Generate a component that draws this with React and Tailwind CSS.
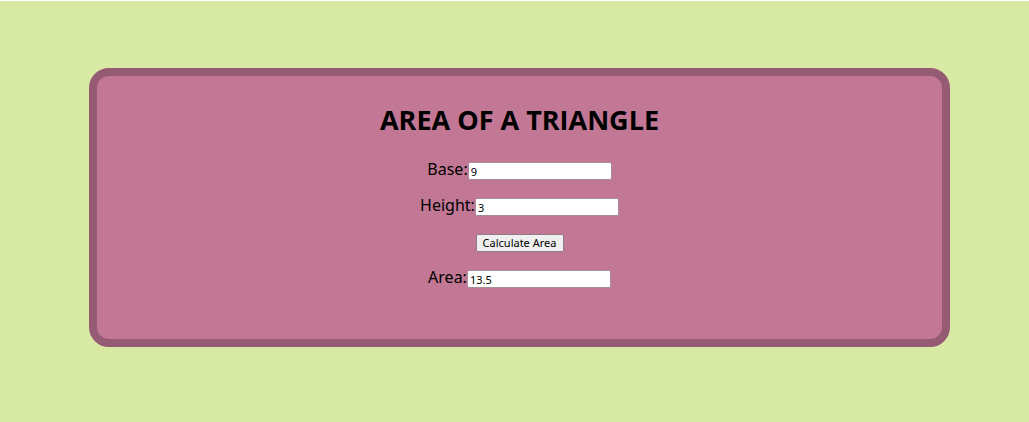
import { useState } from "react";

const inputClass =
  "h-[18px] w-36 rounded-xs border border-[#a58d99] bg-white px-0.5 text-[11px] leading-4 text-black";

function Field({ id, label, ...props }) {
  return (
    <div className="flex h-[18px] items-center justify-center">
      <label htmlFor={id} className="-mt-1 text-base leading-4">
        {label}
      </label>
      <input id={id} type="text" className={inputClass} {...props} />
    </div>
  );
}

export default function App() {
  const [base, setBase] = useState("9");
  const [height, setHeight] = useState("3");
  const [area, setArea] = useState("13.5");

  const calculate = (event) => {
    event.preventDefault();
    setArea(String((Number(base) * Number(height)) / 2));
  };

  return (
    <main className="min-h-screen border-t border-white bg-[#d8e9a4] pt-[67px] pr-[79px] pb-[74px] pl-[89px] font-['Noto_Sans','Lucida_Grande',sans-serif] text-black">
      <form
        onSubmit={calculate}
        className="flex flex-col gap-[18px] rounded-[20px] border-8 border-[#965b74] bg-[#c27795] pt-7 pb-[51px]"
      >
        <h1 className="mb-2 text-center font-['Open_Sans','Lucida_Grande',sans-serif] text-[27px] leading-8 font-bold">
          AREA OF A TRIANGLE
        </h1>
        <Field id="base" label="Base:" value={base} onChange={(e) => setBase(e.target.value)} />
        <Field id="height" label="Height:" value={height} onChange={(e) => setHeight(e.target.value)} />
        <div className="flex justify-center">
          <button
            type="submit"
            className="h-[18px] w-[88px] rounded-xs border border-[#8d7d86] bg-[#efefef] text-[11px] leading-4 whitespace-nowrap"
          >
            Calculate Area
          </button>
        </div>
        <Field id="area" label="Area:" value={area} readOnly />
      </form>
    </main>
  );
}
